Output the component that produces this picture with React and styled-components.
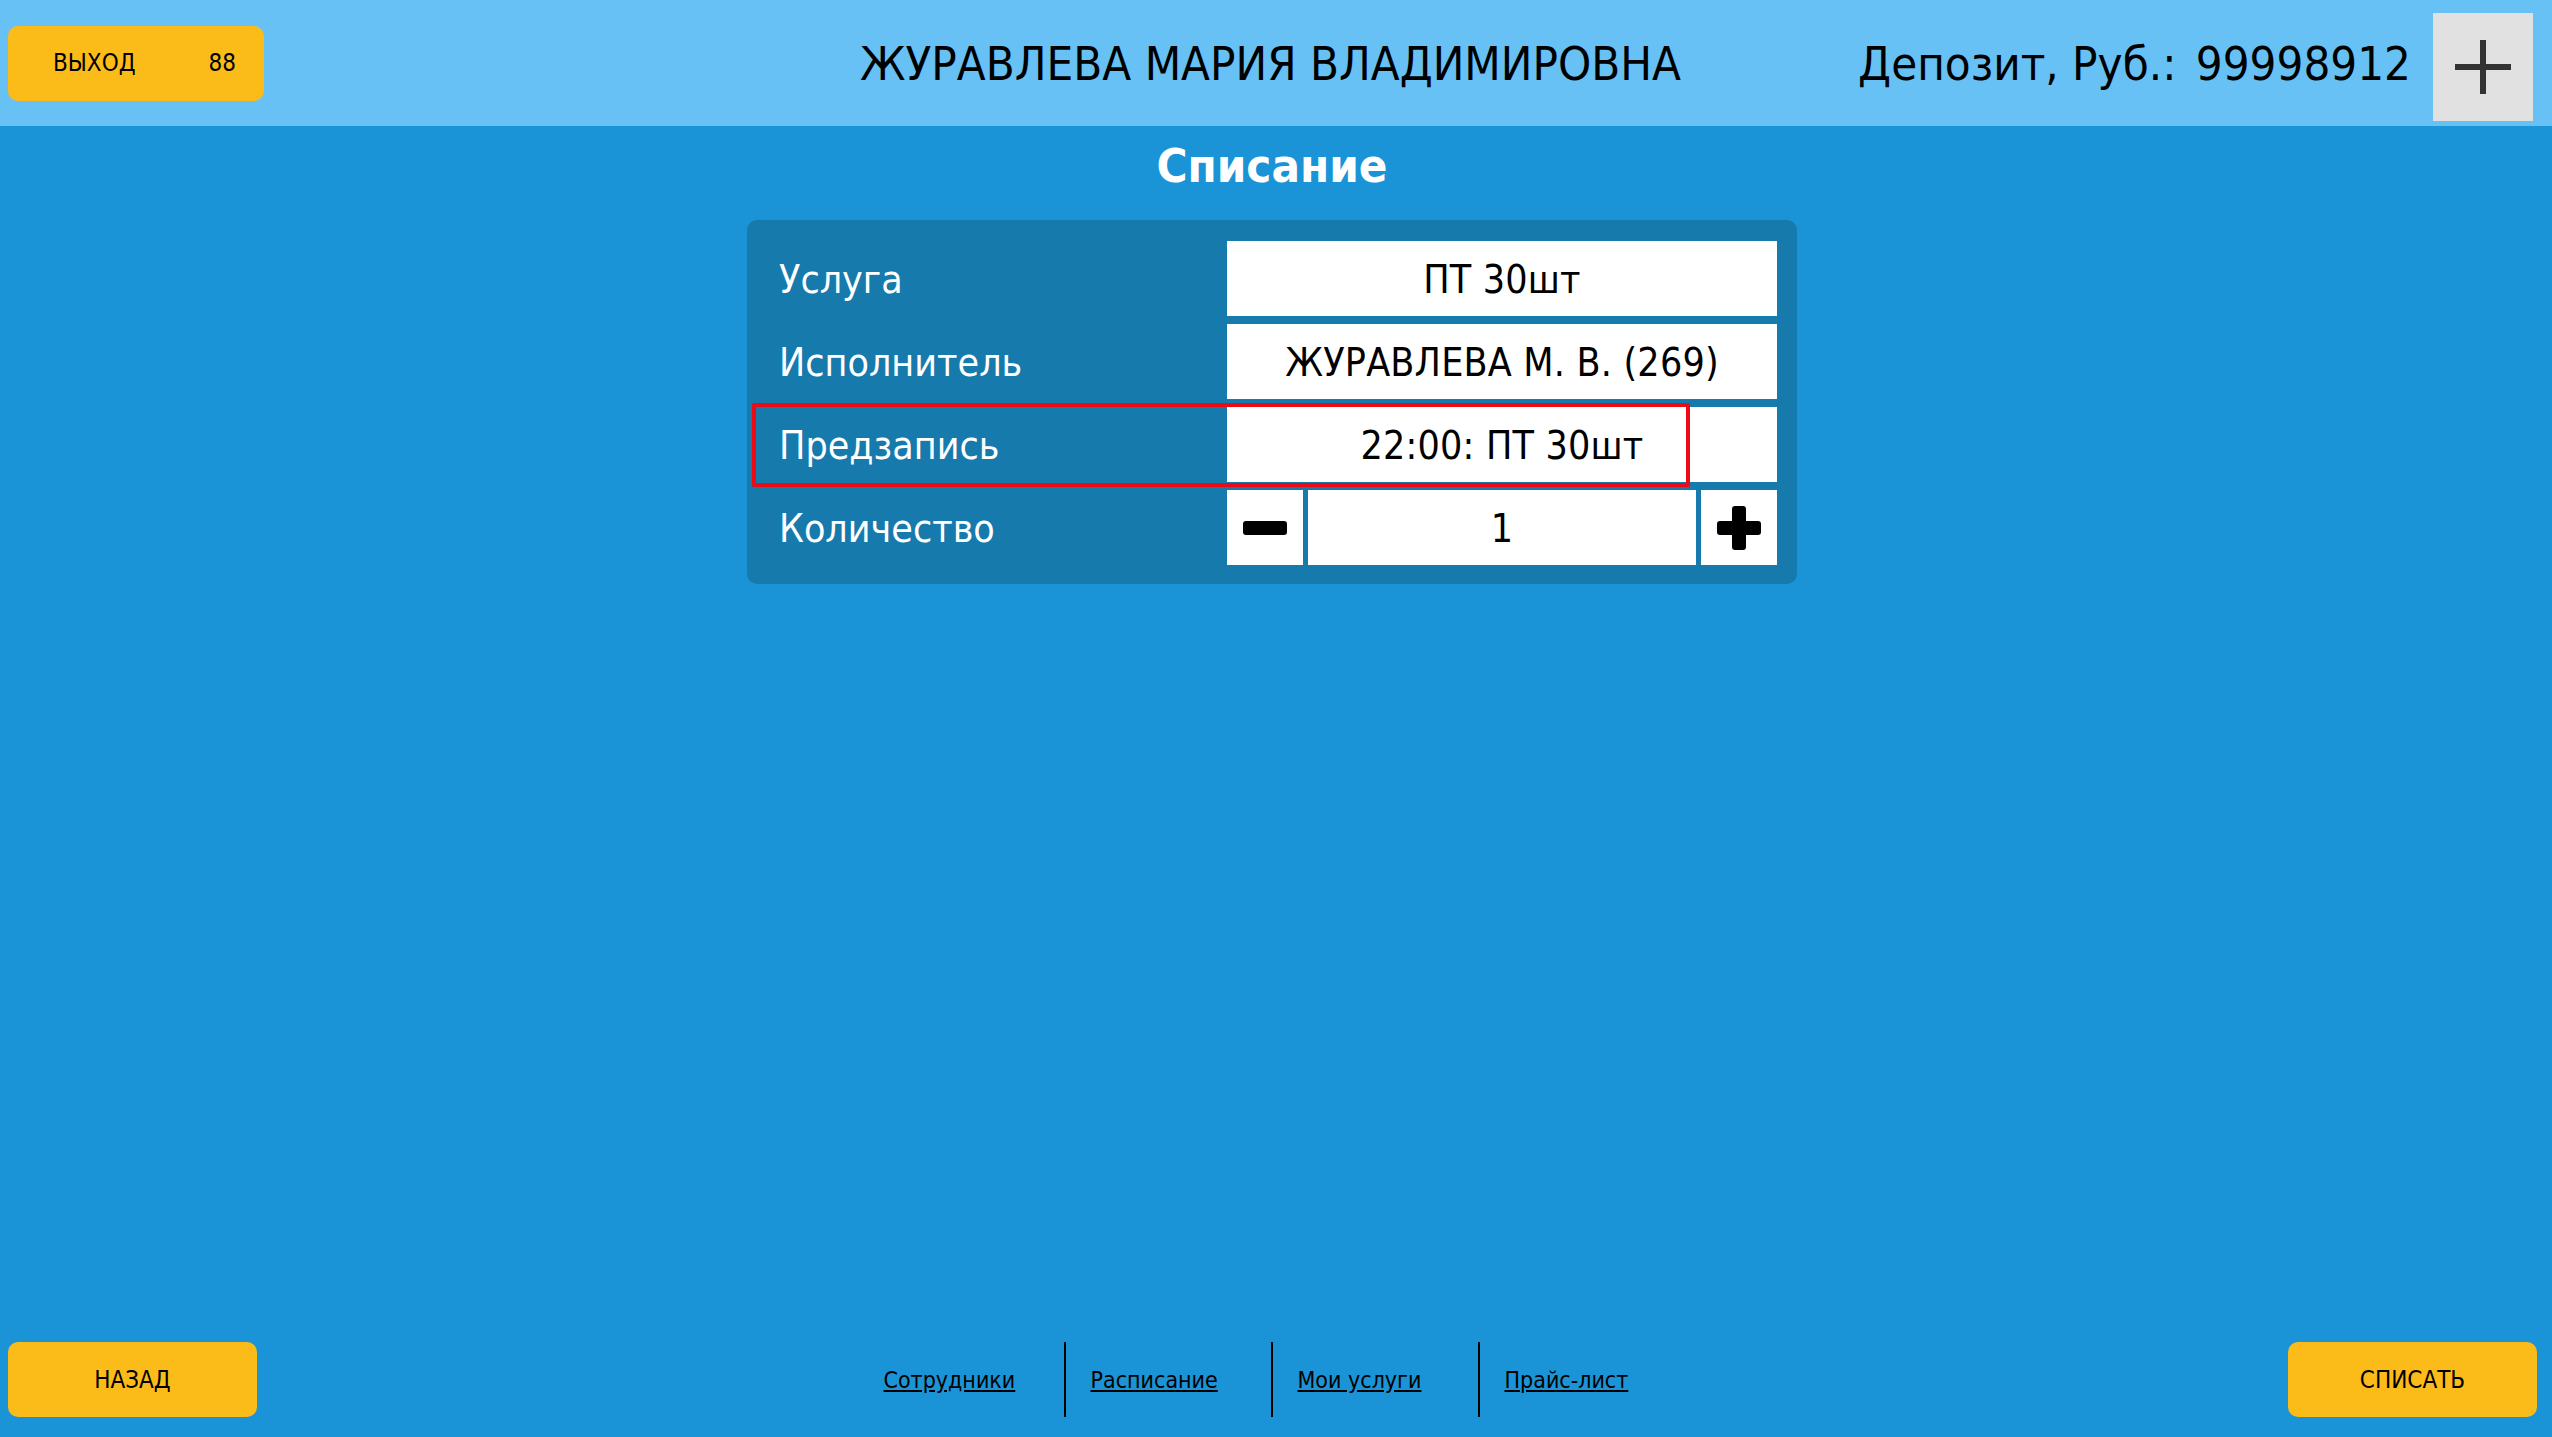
import styled, { createGlobalStyle } from "styled-components";

const GlobalStyle = createGlobalStyle`
  html, body {
    margin: 0;
    padding: 0;
  }
  body {
    background: #1a94d6;
    font-family: "DejaVu Sans Condensed", "DejaVu Sans", sans-serif;
    color: #000;
  }
  * {
    box-sizing: border-box;
  }
`;

const Page = styled.div`
  display: flex;
  flex-direction: column;
  min-height: 100vh;
`;

const Header = styled.header`
  display: grid;
  grid-template-columns: 1fr auto 1fr;
  align-items: center;
  height: 126px;
  padding: 0 19px 0 8px;
  background: #67c1f5;
`;

const YellowButton = styled.button`
  display: flex;
  align-items: center;
  justify-content: ${(p) => (p.$split ? "space-between" : "center")};
  width: ${(p) => p.$width}px;
  height: 75px;
  padding: ${(p) => (p.$split ? "0 28px 0 45px" : "0")};
  border: none;
  border-radius: 10px;
  background: #fbbc1a;
  font-family: inherit;
  font-size: 24px;
  color: #000;
  cursor: pointer;
`;

const ClientName = styled.div`
  font-size: 47px;
  white-space: nowrap;
`;

const DepositBox = styled.div`
  display: flex;
  align-items: center;
  justify-content: flex-end;
  gap: 22px;
`;

const Deposit = styled.span`
  font-size: 47px;
  white-space: nowrap;
`;

const Amount = styled.span`
  margin-left: 6px;
`;

const AddButton = styled.button`
  display: flex;
  align-items: center;
  justify-content: center;
  width: 100px;
  height: 108px;
  margin-top: 8px;
  border: none;
  background: #e1e1e1;
  cursor: pointer;
`;

const Main = styled.main`
  flex: 1;
  display: flex;
  flex-direction: column;
  align-items: center;
  padding-right: 8px;
`;

const Title = styled.h1`
  height: 94px;
  margin: 0;
  padding-top: 12px;
  font-size: 47px;
  font-weight: bold;
  color: #fff;
  text-align: center;
`;

const Panel = styled.div`
  display: flex;
  flex-direction: column;
  gap: 8px;
  width: 1050px;
  padding: 21px 20px 19px 5px;
  border-radius: 10px;
  background: #177aad;
`;

const Row = styled.div`
  position: relative;
  display: grid;
  grid-template-columns: 1fr 550px;
  height: 75px;
`;

const Label = styled.div`
  display: flex;
  align-items: center;
  padding-left: 27px;
  padding-top: 2px;
  font-size: 39px;
  color: #fff;
`;

const Value = styled.div`
  display: flex;
  align-items: center;
  justify-content: center;
  padding-top: 2px;
  background: #fff;
  font-size: 39px;
  letter-spacing: 0.2px;
`;

const Highlight = styled.div`
  position: absolute;
  top: -4px;
  left: 0;
  width: 938px;
  height: 84px;
  border: 4px solid #ec0a14;
  border-radius: 2px;
  pointer-events: none;
`;

const Counter = styled.div`
  display: grid;
  grid-template-columns: 76px 1fr 76px;
  gap: 5px;
`;

const StepButton = styled.button`
  display: flex;
  align-items: center;
  justify-content: center;
  border: none;
  background: #fff;
  cursor: pointer;
`;

const Footer = styled.footer`
  display: grid;
  grid-template-columns: 1fr auto 1fr;
  align-items: center;
  padding: 0 15px 20px 8px;
`;

const Links = styled.nav`
  display: flex;
`;

const LinkCell = styled.div`
  display: flex;
  align-items: center;
  width: 207px;
  height: 75px;
  padding-left: 25px;
  border-right: 2px solid ${(p) => (p.$last ? "transparent" : "#000")};
`;

const NavLink = styled.a`
  font-size: 23px;
  color: #000;
  text-decoration: underline;
  cursor: pointer;
`;

const RightSlot = styled.div`
  display: flex;
  justify-content: flex-end;
`;

const links = ["Сотрудники", "Расписание", "Мои услуги", "Прайс-лист"];

const ThinPlus = () => (
  <svg width="56" height="54" viewBox="0 0 56 54">
    <rect x="0" y="24" width="56" height="6" fill="#333" />
    <rect x="25" y="0" width="6" height="54" fill="#333" />
  </svg>
);

const BoldPlus = () => (
  <svg width="44" height="44" viewBox="0 0 44 44">
    <rect x="0" y="15" width="44" height="14" rx="3" fill="#000" />
    <rect x="15" y="0" width="14" height="44" rx="3" fill="#000" />
  </svg>
);

const BoldMinus = () => (
  <svg width="44" height="14" viewBox="0 0 44 14">
    <rect x="0" y="0" width="44" height="14" rx="3" fill="#000" />
  </svg>
);

export default function App() {
  return (
    <>
      <GlobalStyle />
      <Page>
        <Header>
          <div>
            <YellowButton $width={256} $split>
              <span>ВЫХОД</span>
              <span>88</span>
            </YellowButton>
          </div>
          <ClientName>ЖУРАВЛЕВА МАРИЯ ВЛАДИМИРОВНА</ClientName>
          <DepositBox>
            <Deposit>
              Депозит, Руб.:<Amount> 99998912</Amount>
            </Deposit>
            <AddButton>
              <ThinPlus />
            </AddButton>
          </DepositBox>
        </Header>

        <Main>
          <Title>Списание</Title>
          <Panel>
            <Row>
              <Label>Услуга</Label>
              <Value>ПТ 30шт</Value>
            </Row>
            <Row>
              <Label>Исполнитель</Label>
              <Value>ЖУРАВЛЕВА М. В. (269)</Value>
            </Row>
            <Row>
              <Label>Предзапись</Label>
              <Value>22:00: ПТ 30шт</Value>
              <Highlight />
            </Row>
            <Row>
              <Label>Количество</Label>
              <Counter>
                <StepButton>
                  <BoldMinus />
                </StepButton>
                <Value>1</Value>
                <StepButton>
                  <BoldPlus />
                </StepButton>
              </Counter>
            </Row>
          </Panel>
        </Main>

        <Footer>
          <div>
            <YellowButton $width={249}>НАЗАД</YellowButton>
          </div>
          <Links>
            {links.map((l, i) => (
              <LinkCell key={l} $last={i === links.length - 1}>
                <NavLink>{l}</NavLink>
              </LinkCell>
            ))}
          </Links>
          <RightSlot>
            <YellowButton $width={249}>СПИСАТЬ</YellowButton>
          </RightSlot>
        </Footer>
      </Page>
    </>
  );
}
